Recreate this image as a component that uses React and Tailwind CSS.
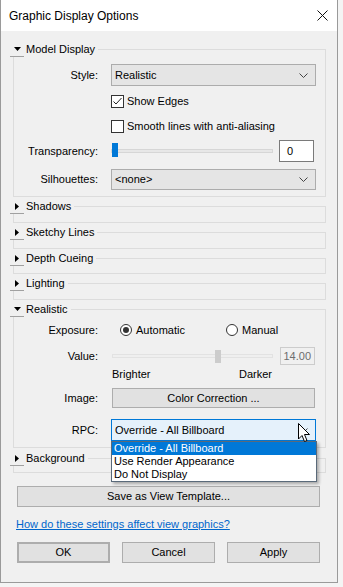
import React from "react";

function TriDown() {
  return (
    <svg width="7" height="4" viewBox="0 0 7 4">
      <polygon points="0,0 7,0 3.5,4" fill="#000" />
    </svg>
  );
}

function TriRight() {
  return (
    <svg width="4" height="7" viewBox="0 0 4 7">
      <polygon points="0,0 4,3.5 0,7" fill="#000" />
    </svg>
  );
}

function Chevron() {
  return (
    <svg width="9" height="5" viewBox="0 0 9 5">
      <path d="M0.5 0.5 L4.5 4.5 L8.5 0.5" fill="none" stroke="#444" strokeWidth="1" />
    </svg>
  );
}

// collapsible section with an etched frame
function Group({ title, open, bodyClass = "", children }) {
  return (
    <div>
      <div className="flex h-[15px]">
        <div className="w-[14px] h-[15px] flex items-center justify-center border-b border-[#a0a0a0]">
          {open ? <TriDown /> : <TriRight />}
        </div>
        <span className="ml-[2px] leading-[15px]">{title}</span>
        <div className="flex-1 ml-[3px] mt-[7px] border-t border-r border-[#dcdcdc]" />
      </div>
      <div className={"ml-[3px] border-l border-r border-b border-[#dcdcdc] " + bodyClass}>
        {children}
      </div>
    </div>
  );
}

function Label({ children }) {
  return <div className="w-[84px] text-right shrink-0">{children}</div>;
}

function Select({ value, className = "" }) {
  return (
    <div
      className={
        "flex items-center justify-between pl-[3px] pr-[7px] border " + className
      }
    >
      <span>{value}</span>
      <Chevron />
    </div>
  );
}

function Checkbox({ checked, label }) {
  return (
    <div className="flex items-center h-[13px] ml-[97px]">
      <div className="w-[13px] h-[13px] border border-[#333] bg-white flex items-center justify-center">
        {checked && (
          <svg width="11" height="11" viewBox="0 0 11 11">
            <path d="M1.5 5.5 L4 8 L9.5 2" fill="none" stroke="#222" strokeWidth="1" />
          </svg>
        )}
      </div>
      <span className="ml-[3px]">{label}</span>
    </div>
  );
}

function Radio({ checked, label, className = "" }) {
  return (
    <div className={"flex items-center " + className}>
      <div className="w-[12px] h-[12px] rounded-full border border-[#333] bg-white flex items-center justify-center">
        {checked && <div className="w-[6px] h-[6px] rounded-full bg-[#333]" />}
      </div>
      <span className="ml-[4px]">{label}</span>
    </div>
  );
}

function Button({ children, className = "" }) {
  return (
    <div
      className={
        "flex items-center justify-center bg-[#e1e1e1] border border-[#adadad] " + className
      }
    >
      {children}
    </div>
  );
}

export default function App() {
  const collapsed = ["Shadows", "Sketchy Lines", "Depth Cueing", "Lighting"];

  return (
    <div className="w-[343px] h-[587px] overflow-hidden bg-[#f4f4f4] text-black text-[11px] font-['Segoe_UI','Liberation_Sans',Arial,sans-serif]">
      <div className="w-[338px] h-[583px] bg-[#f0f0f0] border-l border-r border-b border-[#9a9a9a] flex flex-col">
        {/* title bar */}
        <div className="h-[31px] bg-white flex items-center justify-between pl-[8px] pr-[9px] shrink-0">
          <span className="text-[12px]">Graphic Display Options</span>
          <svg width="11" height="11" viewBox="0 0 11 11">
            <path d="M0.5 0.5 L10.5 10.5 M10.5 0.5 L0.5 10.5" stroke="#111" strokeWidth="1" />
          </svg>
        </div>

        <div className="pl-[9px] pr-[11px] pt-[11px] flex flex-col">
          <Group title="Model Display" open bodyClass="pt-[7px] pb-[6px]">
            <div className="flex items-center h-[22px]">
              <Label>Style:</Label>
              <Select
                value="Realistic"
                className="ml-[13px] w-[205px] h-[22px] bg-[#e5e5e5] border-[#acacac]"
              />
            </div>
            <div className="mt-[9px]">
              <Checkbox checked label="Show Edges" />
            </div>
            <div className="mt-[12px]">
              <Checkbox label="Smooth lines with anti-aliasing" />
            </div>
            <div className="flex items-center h-[22px] mt-[7px]">
              <Label>Transparency:</Label>
              <div className="relative ml-[13px] w-[162px] h-[22px] flex items-center">
                <div className="w-full h-[4px] bg-[#e7e7e7] border border-[#d6d6d6]" />
                <div className="absolute left-[1px] top-[3px] w-[6px] h-[14px] bg-[#0078d7]" />
              </div>
              <div className="ml-[6px] w-[35px] h-[22px] bg-white border border-[#7a7a7a] flex items-center pl-[7px]">
                0
              </div>
            </div>
            <div className="flex items-center h-[21px] mt-[7px]">
              <Label>Silhouettes:</Label>
              <Select
                value="<none>"
                className="ml-[13px] w-[205px] h-[21px] bg-[#e5e5e5] border-[#acacac]"
              />
            </div>
          </Group>

          {collapsed.map((name, i) => (
            <div key={name} className="mt-[2px]">
              <Group title={name} bodyClass={i === 2 ? "h-[8px]" : "h-[9px]"} />
            </div>
          ))}

          <div className="mt-[2px]">
            <Group title="Realistic" open bodyClass="pt-[6px] pb-[6px]">
              <div className="flex items-center h-[14px]">
                <Label>Exposure:</Label>
                <Radio checked label="Automatic" className="ml-[22px] w-[106px]" />
                <Radio label="Manual" />
              </div>
              <div className="flex items-center h-[18px] mt-[10px]">
                <Label>Value:</Label>
                <div className="relative ml-[14px] w-[161px] h-[18px] flex items-center">
                  <div className="w-full h-[4px] bg-[#efefef] border border-[#e2e2e2]" />
                  <div className="absolute left-[103px] top-[3px] w-[6px] h-[13px] bg-[#cccccc]" />
                </div>
                <div className="ml-[7px] w-[35px] h-[18px] border border-[#cccccc] text-[#6d6d6d] flex items-center justify-end pr-[3px]">
                  14.00
                </div>
              </div>
              <div className="flex items-center h-[13px] mt-[3px]">
                <div className="ml-[98px] w-[160px] flex justify-between">
                  <span>Brighter</span>
                  <span>Darker</span>
                </div>
              </div>
              <div className="flex items-center h-[20px] mt-[7px]">
                <Label>Image:</Label>
                <Button className="ml-[14px] w-[203px] h-[20px]">Color Correction ...</Button>
              </div>
              <div className="flex items-center h-[22px] mt-[11px]">
                <Label>RPC:</Label>
                <div className="relative ml-[13px]">
                  <Select
                    value="Override - All Billboard"
                    className="w-[205px] h-[22px] bg-[#e5f1fb] border-[#0078d7]"
                  />
                  <div className="absolute left-0 top-[22px] z-10 w-[206px] bg-white border border-[#5a6a7a] shadow-[2px_2px_3px_rgba(0,0,0,0.3)] flex flex-col">
                    <div className="h-[13px] leading-[13px] pl-[2px] bg-[#0078d7] text-white">
                      Override - All Billboard
                    </div>
                    <div className="h-[13px] leading-[13px] pl-[2px]">Use Render Appearance</div>
                    <div className="h-[13px] leading-[13px] pl-[2px]">Do Not Display</div>
                  </div>
                  <svg
                    className="absolute left-[187px] top-[4px] z-20"
                    width="13"
                    height="20"
                    viewBox="0 0 13 20"
                  >
                    <path
                      d="M0.5 0.5 L0.5 16 L4 12.5 L6.5 18.5 L9 17.5 L6.5 11.5 L11.5 11.5 Z"
                      fill="#fff"
                      stroke="#000"
                      strokeWidth="1"
                    />
                  </svg>
                </div>
              </div>
            </Group>
          </div>

          <div className="mt-[3px]">
            <Group title="Background" bodyClass="h-[7px]" />
          </div>

          <Button className="mt-[13px] ml-[7px] w-[303px] h-[21px]">Save as View Template...</Button>

          <div className="mt-[10px] h-[15px] leading-[15px] ml-[6px] text-[#0066cc] underline">
            How do these settings affect view graphics?
          </div>

          <div className="mt-[10px] ml-[7px] flex gap-[12px]">
            <Button className="w-[93px] h-[21px] border-2 border-[#0078d7]">OK</Button>
            <Button className="w-[93px] h-[21px]">Cancel</Button>
            <Button className="w-[93px] h-[21px]">Apply</Button>
          </div>
        </div>
      </div>
    </div>
  );
}
